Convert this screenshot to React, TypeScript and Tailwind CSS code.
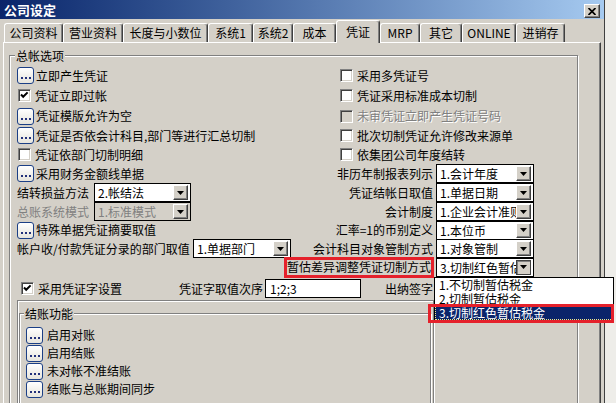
import React from "react";

type Tab = { label: string; w: string; sel?: boolean };
const tabs: Tab[] = [
  { label: "公司资料", w: "w-[59px]" },
  { label: "营业资料", w: "w-[60px]" },
  { label: "长度与小数位", w: "w-[85px]" },
  { label: "系统1", w: "w-[45px]" },
  { label: "系统2", w: "w-[40px]" },
  { label: "成本", w: "w-[43px]" },
  { label: "凭证", w: "w-[44px]", sel: true },
  { label: "MRP", w: "w-[40px]" },
  { label: "其它", w: "w-[42px]" },
  { label: "ONLINE", w: "w-[54px]" },
  { label: "进销存", w: "w-[49px]" },
];

function DotsBtn() {
  return (
    <span className="flex h-[17px] w-[17px] shrink-0 items-end justify-center gap-[2px] rounded-[3px] border border-[#1b3f86] bg-linear-to-b from-white to-[#e6e4dc] pb-[4px]">
      <i className="block h-[2px] w-[2px] bg-[#22307a]" />
      <i className="block h-[2px] w-[2px] bg-[#22307a]" />
      <i className="block h-[2px] w-[2px] bg-[#22307a]" />
    </span>
  );
}

function Check({ on, disabled }: { on?: boolean; disabled?: boolean }) {
  return (
    <span
      className={`relative block h-[13px] w-[13px] shrink-0 border border-b-white border-l-[#808080] border-r-white border-t-[#808080] shadow-[inset_1px_1px_0_#404040,inset_-1px_-1px_0_#d4d0c8] ${
        disabled ? "bg-[#d4d0c8]" : "bg-white"
      }`}
    >
      {on && (
        <svg className="absolute left-0 top-0" width="11" height="11" viewBox="0 0 11 11">
          <path d="M2 4.5 L4.2 6.8 L8.6 2.4" stroke="#000" strokeWidth="2" fill="none" />
        </svg>
      )}
    </span>
  );
}

function Combo({
  text,
  w,
  disabled,
  pressed,
}: {
  text: string;
  w: string;
  disabled?: boolean;
  pressed?: boolean;
}) {
  return (
    <div
      className={`flex h-[19px] shrink-0 items-center border border-black ${w} ${
        disabled ? "bg-[#d4d0c8] text-[#808080]" : "bg-white text-black"
      }`}
    >
      <span className="h-[17px] min-w-0 flex-1 overflow-hidden whitespace-nowrap pl-[3px] leading-[17px]">{text}</span>
      <span
        className={`mr-[2px] flex h-[15px] w-[15px] shrink-0 items-center justify-center bg-[#d4d0c8] ${
          pressed
            ? "border border-[#404040] shadow-[inset_1px_1px_0_#808080]"
            : "border border-b-[#404040] border-l-white border-r-[#404040] border-t-white shadow-[inset_-1px_-1px_0_#808080]"
        }`}
      >
        <svg width="7" height="4" viewBox="0 0 7 4">
          <path d="M0 0h7L3.5 4z" fill="#000" />
        </svg>
      </span>
    </div>
  );
}

function BtnRow({ text }: { text: string }) {
  return (
    <div className="flex items-center">
      <DotsBtn />
      <span className="ml-[2px] whitespace-nowrap">{text}</span>
    </div>
  );
}

function CheckRow({ text, on, disabled, ml }: { text: string; on?: boolean; disabled?: boolean; ml?: string }) {
  return (
    <div className={`flex items-center ${ml ?? ""}`}>
      <Check on={on} disabled={disabled} />
      <span
        className={`ml-[4px] whitespace-nowrap ${
          disabled ? "text-[#808080] [text-shadow:1px_1px_0_#fff]" : ""
        }`}
      >
        {text}
      </span>
    </div>
  );
}

function RightCombo({ label, value, highlight, pressed }: { label: string; value: string; highlight?: boolean; pressed?: boolean }) {
  return (
    <div className="flex items-center justify-end pr-[43px]">
      {highlight ? (
        <span className="mr-[2px] flex h-[21px] shrink-0 items-center whitespace-nowrap border-[3px] border-[#e5212b]">
          {label}
        </span>
      ) : (
        <span className="mr-[3px] shrink-0 whitespace-nowrap">{label}</span>
      )}
      <Combo text={value} w="w-[98px]" pressed={pressed} />
    </div>
  );
}

export default function App() {
  return (
    <div className="relative flex h-[403px] w-[616px] overflow-hidden bg-[#eeede9] font-['Noto_Sans_CJK_SC','Noto_Sans',sans-serif] text-[12px] leading-[14px] text-black">
      <div className="flex h-full w-[605px] shrink-0 flex-col border-r border-[#404040] bg-[#d4d0c8]">
        {/* title bar */}
        <div className="flex h-[19px] shrink-0 items-start justify-between bg-linear-to-r from-[#0a246a] to-[#a6caf0] pl-[4px] pr-[4px]">
          <span className="mt-[2px] text-[13px] font-bold leading-[15px] text-white">公司设定</span>
          <span className="mt-[4px] flex h-[14px] w-[16px] items-center justify-center border border-b-[#404040] border-l-white border-r-[#404040] border-t-white bg-[#d4d0c8] shadow-[inset_-1px_-1px_0_#808080]">
            <svg width="8" height="7" viewBox="0 0 8 7">
              <path d="M0.5 0 L7.5 7 M7.5 0 L0.5 7" stroke="#000" strokeWidth="1.7" />
            </svg>
          </span>
        </div>

        {/* tabs */}
        <div className="relative z-10 flex h-[23px] shrink-0 items-end pl-[4px]">
          {tabs.map((t) => (
            <div
              key={t.label}
              className={`flex shrink-0 items-center justify-center rounded-tl-[3px] rounded-tr-[3px] border-l border-t border-white border-r border-r-[#404040] bg-[#d4d0c8] shadow-[inset_-1px_0_0_#808080] whitespace-nowrap ${t.w} ${
                t.sel ? "-mb-px h-[23px]" : "h-[19px]"
              }`}
            >
              {t.label}
            </div>
          ))}
        </div>

        {/* tab panel */}
        <div className="ml-[3px] mr-[3px] flex-1 border-l border-t border-white border-r border-r-[#404040] shadow-[inset_-1px_0_0_#808080]">
          {/* 总帐选项 */}
          <div className="relative ml-[5px] mt-[12px] h-[400px] w-[569px] border border-[#808080] pl-[7px] pt-[10px] shadow-[inset_1px_1px_0_#fff,1px_1px_0_#fff]">
            <span className="absolute -top-[7px] left-[5px] bg-[#d4d0c8] px-[1px]">总帐选项</span>

            <div className="grid grid-cols-[323px_237px] grid-rows-[19px_21px_20px_19px_19px_19px_19px_19px_18px_19px_18px]">
              <BtnRow text="立即产生凭证" />
              <CheckRow text="采用多凭证号" />
              <CheckRow text="凭证立即过帐" on ml="ml-[1px]" />
              <CheckRow text="凭证采用标准成本切制" />
              <BtnRow text="凭证模版允许为空" />
              <CheckRow text="未审凭证立即产生凭证号码" disabled />
              <BtnRow text="凭证是否依会计科目,部门等进行汇总切制" />
              <CheckRow text="批次切制凭证允许修改来源单" />
              <CheckRow text="凭证依部门切制明细" ml="ml-[1px]" />
              <CheckRow text="依集团公司年度结转" />
              <BtnRow text="采用财务金额线单据" />
              <RightCombo label="非历年制报表列示" value="1.会计年度" />
              <div className="flex items-center">
                <span className="w-[77px] shrink-0 whitespace-nowrap">结转损益方法</span>
                <Combo text="2.帐结法" w="w-[97px]" />
              </div>
              <RightCombo label="凭证结帐日取值" value="1.单据日期" />
              <div className="flex items-center">
                <span className="w-[77px] shrink-0 whitespace-nowrap text-[#808080]">总账系统模式</span>
                <Combo text="1.标准模式" w="w-[97px]" disabled />
              </div>
              <RightCombo label="会计制度" value="1.企业会计准则" />
              <BtnRow text="特殊单据凭证摘要取值" />
              <RightCombo label="汇率=1的币别定义" value="1.本位币" />
              <div className="flex items-center">
                <span className="w-[176px] shrink-0 whitespace-nowrap">帐户收/付款凭证分录的部门取值</span>
                <Combo text="1.单据部门" w="w-[98px]" />
              </div>
              <RightCombo label="会计科目对象管制方式" value="1.对象管制" />
              <div />
              <RightCombo label="暂估差异调整凭证切制方式" value="3.切制红色暂估税金" highlight pressed />
            </div>

            {/* row 12 */}
            <div className="mt-[3px] flex h-[19px] items-center">
              <div className="flex w-[162px] shrink-0 items-center pl-[4px]">
                <Check on />
                <span className="ml-[4px] whitespace-nowrap">采用凭证字设置</span>
              </div>
              <span className="w-[84px] shrink-0 whitespace-nowrap">凭证字取值次序</span>
              <div className="ml-[2px] flex h-[19px] w-[96px] shrink-0 items-center border border-black bg-white pl-[4px]">
                1;2;3
              </div>
              <span className="ml-[24px] w-[48px] shrink-0 whitespace-nowrap">出纳签字</span>
              <Combo text="" w="w-[98px] ml-[3px]" />
            </div>

            {/* 结账功能 */}
            <div className="mt-[2px] h-[120px] w-[417px] border-l border-r border-t border-[#808080] pt-[12px] shadow-[inset_1px_1px_0_#fff,1px_0_0_#fff]">
              <div className="relative ml-[1px] h-[110px] w-[412px] border border-[#808080] pl-[6px] pt-[12px] shadow-[inset_1px_1px_0_#fff,1px_1px_0_#fff]">
                <span className="absolute -top-[7px] left-[4px] bg-[#d4d0c8] px-[1px]">结账功能</span>
                {["启用对账", "启用结账", "未对帐不准结账", "结账与总账期间同步"].map((t) => (
                  <div key={t} className="flex h-[18px] items-center">
                    <DotsBtn />
                    <span className="ml-[4px] whitespace-nowrap">{t}</span>
                  </div>
                ))}
              </div>
            </div>
          </div>
        </div>
      </div>
      <div className="flex-1" />

      {/* open dropdown list */}
      <div className="absolute left-[434px] top-[277px] z-20 flex h-[46px] w-[180px] flex-col border border-black bg-white">
        <div className="flex h-[14px] items-center whitespace-nowrap pl-[4px]">1.不切制暂估税金</div>
        <div className="flex h-[14px] items-center whitespace-nowrap pl-[4px]">2.切制暂估税金</div>
        <div className="flex h-[14px] items-center whitespace-nowrap bg-[#0a246a] pl-[4px] text-white outline-1 -outline-offset-1 outline-dotted outline-[#f0e68c]">
          3.切制红色暂估税金
        </div>
      </div>
      {/* red annotation around selected item */}
      <div className="absolute left-[428px] top-[304px] z-30 h-[19px] w-[186px] border-[3px] border-[#e5212b]" />
    </div>
  );
}
